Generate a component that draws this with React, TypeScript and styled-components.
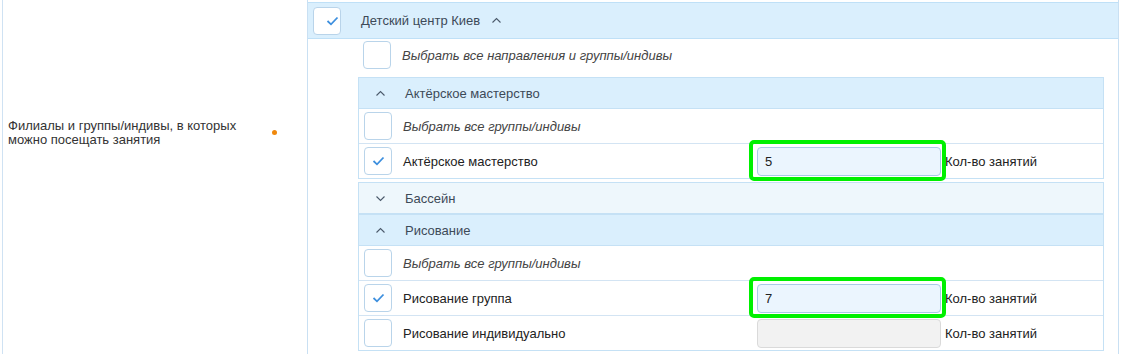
import React from 'react'
import styled, { createGlobalStyle } from "styled-components";

const GlobalStyle = createGlobalStyle`
    html, body {
        margin:0;
        padding:0;
        background:#fff;
        font-family:"Liberation Sans", Arial, sans-serif;
        font-size:13px;
        color:#222;
    }
`;

type Item = {
    label: string;
    checked?: boolean;
    count?: string;
    disabled?: boolean;
    highlight?: boolean;
};

type Direction = {
    title: string;
    open: boolean;
    items?: Item[];
};

const directions: Direction[] = [
    {
        title: "Актёрское мастерство",
        open: true,
        items: [
            { label: "Актёрское мастерство", checked: true, count: "5", highlight: true },
        ],
    },
    { title: "Бассейн", open: false },
    {
        title: "Рисование",
        open: true,
        items: [
            { label: "Рисование группа", checked: true, count: "7", highlight: true },
            { label: "Рисование индивидуально", disabled: true },
        ],
    },
];

function Chevron({ up }: { up: boolean }) {
    return (
        <svg width="11" height="7" viewBox="0 0 11 7">
            <path
                d={up ? "M1.5 5.5 L5.5 1.5 L9.5 5.5" : "M1.5 1.5 L5.5 5.5 L9.5 1.5"}
                fill="none"
                stroke="#4b5a6b"
                strokeWidth="1.1"
            />
        </svg>
    );
}

function CheckBox({ checked }: { checked?: boolean }) {
    return (
        <Box>
            {checked && (
                <svg width="13" height="10" viewBox="0 0 13 10">
                    <path d="M1.5 5 L5 8.3 L11.5 1.5" fill="none" stroke="#3d8fde" strokeWidth="1.8" />
                </svg>
            )}
        </Box>
    );
}

export default function App() {
    return (
        <>
            <GlobalStyle />
            <Container>
                <LabelCell>
                    <LabelText>Филиалы и группы/индивы, в которых можно посещать занятия</LabelText>
                    <Required />
                </LabelCell>
                <ValueCell>
                    <Branch>
                        <BranchHead>
                            <CheckBox checked />
                            <BranchTitle>Детский центр Киев</BranchTitle>
                            <Chevron up />
                        </BranchHead>
                        <SelectAllRow>
                            <CheckBox />
                            <Italic>Выбрать все направления и группы/индивы</Italic>
                        </SelectAllRow>
                        {directions.map((d) => (
                            <Group key={d.title} $open={d.open}>
                                <GroupHead $open={d.open}>
                                    <Chevron up={d.open} />
                                    <GroupTitle>{d.title}</GroupTitle>
                                </GroupHead>
                                {d.open && (
                                    <>
                                        <Row>
                                            <CheckBox />
                                            <Italic>Выбрать все группы/индивы</Italic>
                                        </Row>
                                        {d.items?.map((it) => (
                                            <Row key={it.label}>
                                                <CheckBox checked={it.checked} />
                                                <RowLabel>{it.label}</RowLabel>
                                                <InputWrap>
                                                    <CountInput
                                                        $disabled={it.disabled}
                                                        value={it.count ?? ""}
                                                        disabled={it.disabled}
                                                        readOnly
                                                    />
                                                    {it.highlight && <Ring />}
                                                </InputWrap>
                                                <Unit>Кол-во занятий</Unit>
                                            </Row>
                                        ))}
                                    </>
                                )}
                            </Group>
                        ))}
                    </Branch>
                </ValueCell>
            </Container>
        </>
    );
}

const Container = styled.div`
    display:flex;
    width:1117px;
    height:354px;
    margin-left:2px;
`;

const LabelCell = styled.div`
    position:relative;
    width:305px;
    border-left:1px solid #cfe2f3;
    padding:119px 0 0 5px;
    box-sizing:border-box;
    display:flex;
    align-items:flex-start;
`;
const LabelText = styled.p`
    margin:0;
    width:250px;
    line-height:14px;
    color:#333;
`;
const Required = styled.span`
    width:5px;
    height:5px;
    border-radius:50%;
    background:#f0880c;
    margin:11px 0 0 14px;
`;

const ValueCell = styled.div`
    flex:1;
    border-left:1px solid #c9e0f3;
    border-right:1px solid #c9e0f3;
    padding-top:2px;
`;

const Branch = styled.div`
    border-top:1px solid #bfe0f7;
`;
const BranchHead = styled.div`
    display:flex;
    align-items:center;
    height:35px;
    padding-left:5px;
    background:#daeffd;
    border-bottom:1px solid #bfe0f7;
    svg { margin-left:11px; }
`;
const BranchTitle = styled.span`
    margin-left:20px;
    color:#3d4a58;
`;

const Box = styled.span`
    width:28px;
    height:28px;
    box-sizing:border-box;
    border:1px solid #b9d4ea;
    border-radius:4px;
    background:#fff;
    display:flex;
    align-items:center;
    justify-content:center;
    flex-shrink:0;
`;

const SelectAllRow = styled.div`
    display:flex;
    align-items:center;
    padding:2px 0 8px 55px;
`;
const Italic = styled.span`
    margin-left:11px;
    font-style:italic;
    color:#444;
`;

const Group = styled.div<{ $open: boolean }>`
    margin:0 14px ${p => (p.$open ? "3px" : "0")} 50px;
    border:1px solid #c5e1f5;
    & + & { margin-top:${p => (p.$open ? "-1px" : "0")}; }
`;
const GroupHead = styled.div<{ $open: boolean }>`
    display:flex;
    align-items:center;
    height:30px;
    padding-left:16px;
    background:${p => (p.$open ? "#daeffd" : "#eef7fc")};
    border-bottom:${p => (p.$open ? "1px solid #c5e1f5" : "none")};
`;
const GroupTitle = styled.span`
    margin-left:19px;
    color:#3d4a58;
`;

const Row = styled.div`
    display:flex;
    align-items:center;
    height:34px;
    padding-left:5px;
    border-bottom:1px solid #d3e4f3;
    &:last-child { border-bottom:none; }
`;
const RowLabel = styled.span`
    flex:1;
    margin-left:11px;
    color:#222;
`;
const InputWrap = styled.div`
    position:relative;
    width:184px;
    height:29px;
`;
const CountInput = styled.input<{ $disabled?: boolean }>`
    width:100%;
    height:100%;
    box-sizing:border-box;
    border:1px solid ${p => (p.$disabled ? "#dadada" : "#a9cae7")};
    border-radius:4px;
    background:${p => (p.$disabled ? "#f2f2f2" : "#ebf5fe")};
    padding:0 7px;
    font-family:inherit;
    font-size:13px;
    color:#222;
    outline:none;
`;
const Ring = styled.span`
    position:absolute;
    top:-7px;
    left:-8px;
    right:-5px;
    bottom:-5px;
    border:4px solid #00f000;
    border-radius:5px;
    pointer-events:none;
`;
const Unit = styled.span`
    width:158px;
    margin-left:4px;
    color:#222;
`;
